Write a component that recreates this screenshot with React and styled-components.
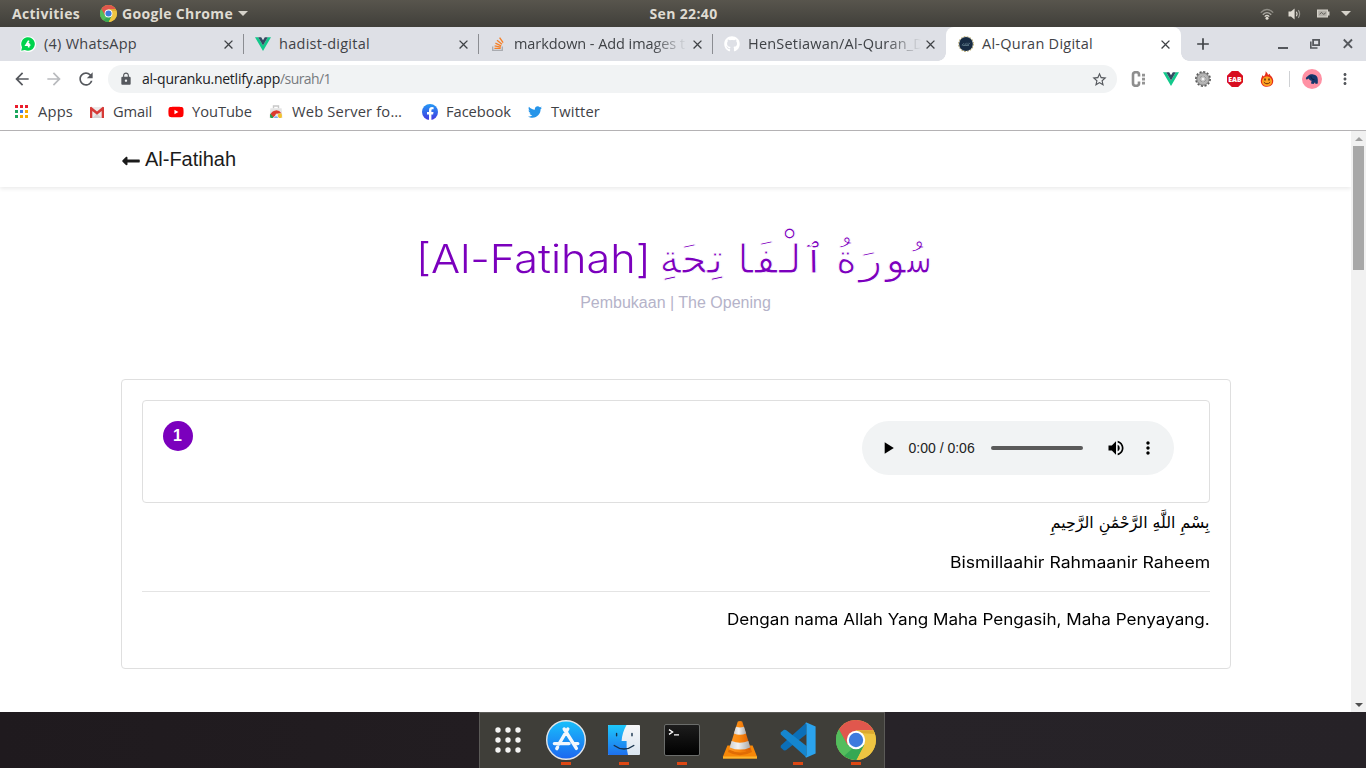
import React, { useLayoutEffect, useRef, useState } from "react";
import styled, { createGlobalStyle } from "styled-components";
import { FaLongArrowAltLeft, FaGithub, FaTwitter, FaYoutube } from "react-icons/fa";
import {
  MdArrowBack, MdArrowForward, MdRefresh, MdLock, MdStarBorder,
  MdClose, MdAdd, MdMoreVert, MdVolumeUp, MdPlayArrow,
} from "react-icons/md";

const Global = createGlobalStyle`
  * { box-sizing: border-box; }
  html, body { margin: 0; padding: 0; overflow: hidden; }
  body { background: #fff; font-family: "Liberation Sans", Arial, sans-serif; }
  svg { display: block; flex: none; }
`;

const UI_FONT = `"Open Sans", "Noto Sans", sans-serif`;
const PURPLE = "#7b00bd";

/* Single-line label whose tracking is computed so that it fills a given width. */
const Line = styled.span`
  display: inline-block;
  white-space: pre;
  flex: none;
`;
function Fit({ w, children }) {
  const ref = useRef(null);
  const [track, setTrack] = useState(0);
  useLayoutEffect(() => {
    const natural = ref.current.getBoundingClientRect().width;
    setTrack((w - natural) / String(children).length);
  }, [w, children]);
  return <Line ref={ref} style={{ letterSpacing: track }}>{children}</Line>;
}

/* Single-line label whose glyphs are widened to fill a given width. */
const WideBox = styled.span`
  display: inline-flex;
  width: ${(p) => p.$w}px;
  flex: none;
  vertical-align: top;
`;
const WideText = styled(Line)`transform-origin: 0 50%;`;
function Wide({ w, children }) {
  const ref = useRef(null);
  const [scale, setScale] = useState(1);
  useLayoutEffect(() => {
    setScale(w / ref.current.offsetWidth);
  }, [w, children]);
  return (
    <WideBox $w={w}>
      <WideText ref={ref} style={{ transform: `scaleX(${scale})` }}>{children}</WideText>
    </WideBox>
  );
}

const Screen = styled.div`
  width: 1366px;
  height: 768px;
  display: flex;
  flex-direction: column;
  overflow: hidden;
`;

/* ---------- desktop top bar ---------- */
const TopBar = styled.div`
  height: 27px;
  flex: none;
  display: grid;
  grid-template-columns: 1fr auto 1fr;
  align-items: center;
  padding: 0 15px 0 16px;
  background: linear-gradient(#58554d, #403f3a);
  color: #dfdbd2;
  font: 700 14px/27px ${UI_FONT};
`;
const TopLeft = styled.div`
  display: flex;
  align-items: center;
  margin-left: -4px;
  svg { margin: 0 5px 0 20px; }
`;
const TopRight = styled.div`
  display: flex;
  justify-content: flex-end;
  align-items: center;
`;
const Caret = styled.i`
  width: 0;
  height: 0;
  margin-left: ${(p) => p.$gap}px;
  border: 5px solid transparent;
  border-top-color: #d5d2ca;
  border-bottom: 0;
`;
const IconGap = styled.i`
  width: ${(p) => p.$w}px;
  flex: none;
`;

/* ---------- tabs ---------- */
const TabStrip = styled.div`
  height: 34px;
  flex: none;
  display: flex;
  background: #dee0e6;
  font: 14.5px/34px ${UI_FONT};
  color: #3f4246;
`;
const Tab = styled.div`
  position: relative;
  width: ${(p) => p.$w}px;
  flex: none;
  display: flex;
  align-items: center;
  padding: 0 8px 0 ${(p) => p.$pad || 11}px;
  ${(p) => p.$line && `
    &::after { content: ""; width: 1px; height: 20px; background: #8b8d92; margin: 0 -8px 0 7px; }
  `}
  ${(p) => p.$active && `
    background: #fff;
    border-radius: 8px 8px 0 0;
    padding-left: 12px;
    &::before, &::after { content: ""; position: absolute; bottom: 0; width: 8px; height: 8px; }
    &::before { left: -8px; background: radial-gradient(circle at 0 0, transparent 7.5px, #fff 8px); }
    &::after { right: -8px; background: radial-gradient(circle at 100% 0, transparent 7.5px, #fff 8px); }
  `}
`;
const TabTitle = styled.div`
  flex: 1;
  min-width: 0;
  margin-left: 8px;
  ${(p) => p.$fade && "mask-image: linear-gradient(90deg, #000 138px, transparent 173px);"}
`;
const WindowButtons = styled.div`
  flex: 1;
  display: flex;
  align-items: center;
  padding-left: 12px;
`;
const WinIcons = styled.div`
  margin-left: 64px;
`;

/* ---------- toolbar ---------- */
const Toolbar = styled.div`
  height: 36px;
  flex: none;
  display: flex;
  align-items: center;
  padding: 0 11px 0 12px;
  color: #55585d;
`;
const Nav = styled.div`
  display: flex;
  gap: 12px;
  margin-right: 12px;
  width: 84px;
`;
const Omnibox = styled.div`
  width: 1009px;
  height: 28px;
  display: flex;
  align-items: center;
  border-radius: 14px;
  background: #f1f3f4;
  padding: 0 9px 0 11px;
  font: 14px/28px ${UI_FONT};
  color: #202124;
  > svg:first-child { margin-right: 9px; }
  > svg:last-child { margin-left: auto; }
`;
const UrlPath = styled.span`color: #777a7e;`;
const Extensions = styled.div`
  flex: 1;
  display: flex;
  align-items: center;
  padding-left: 14px;
  gap: 16px;
  > svg:last-child { margin-left: -2px; }
`;
const Divider = styled.i`
  width: 1px;
  height: 16px;
  background: #cfd1d4;
  margin: 0 -4px 0 -2px;
`;
const Avatar = styled.div`
  width: 20px;
  height: 20px;
  border-radius: 50%;
  background: #ff91a4;
`;

/* ---------- bookmarks ---------- */
const Bookmarks = styled.div`
  height: 34px;
  flex: none;
  display: flex;
  align-items: center;
  padding: 0 0 4px 13px;
  border-bottom: 1px solid #b6b4b6;
  font: 14.7px/29px ${UI_FONT};
  color: #3f4246;
`;
const Bookmark = styled.div`
  display: flex;
  align-items: center;
  gap: ${(p) => p.$inner || 8}px;
  margin-right: ${(p) => p.$gap || 0}px;
`;

/* ---------- web page ---------- */
const Viewport = styled.div`
  height: 581px;
  flex: none;
  display: flex;
`;
const Page = styled.div`
  width: 1351px;
  display: flex;
  flex-direction: column;
  align-items: center;
`;
const PageHeader = styled.header`
  width: 100%;
  height: 56px;
  flex: none;
  display: flex;
  align-items: center;
  padding-left: 121px;
  color: #1b1b1b;
  font-size: 20px;
  box-shadow: 0 2px 4px rgba(0, 0, 0, 0.08);
  svg { margin: 3px 4px 0 0; }
`;
const Title = styled.h1`
  display: flex;
  align-items: center;
  margin: 45px 0 0;
  height: 54px;
  width: 520px;
  color: ${PURPLE};
  font: 300 39px/54px Inter, sans-serif;
`;
const TitleArabic = styled.span`
  margin: 0 5px 0 auto;
  white-space: nowrap;
  word-spacing: -15px;
  font: 400 40px/54px "DejaVu Sans Mono", monospace;
  -webkit-text-stroke: 1px #fff;
`;
const Subtitle = styled.p`
  margin: 8px 0 0;
  font-size: 16px;
  line-height: 18px;
  color: #b5b3c9;
`;
const Card = styled.section`
  width: 1110px;
  height: 290px;
  margin-top: 67px;
  padding: 20px;
  border: 1px solid #dfdfdf;
  border-radius: 4px;
  color: #000;
  font: 400 16px/24px Inter, sans-serif;
  text-align: right;
`;
const VerseHead = styled.div`
  height: 103px;
  display: flex;
  justify-content: space-between;
  align-items: flex-start;
  padding: 20px 35px 0 20px;
  border: 1px solid #dfdfdf;
  border-radius: 4px;
`;
const Badge = styled.div`
  width: 30px;
  height: 30px;
  border-radius: 50%;
  background: ${PURPLE};
  color: #fff;
  font: 700 16px/30px "Liberation Sans", sans-serif;
  text-align: center;
`;
const Player = styled.div`
  width: 312px;
  height: 54px;
  border-radius: 27px;
  background: #f1f3f4;
  display: flex;
  align-items: center;
  padding-left: 16px;
  color: #000;
`;
const Time = styled.span`
  margin: 0 16px 0 11px;
  color: #222;
  font: 14px/20px "Liberation Sans", sans-serif;
`;
const Track = styled.i`
  width: 92px;
  height: 4px;
  border-radius: 2px;
  background: #5a5a5a;
  margin-right: 23px;
`;
const Verse = styled.p`
  margin: 8px 0 0;
  font: 15.8px/24px "DejaVu Sans", sans-serif;
`;
const Latin = styled.p`margin: 15px 0 0;`;
const Rule = styled.hr`
  margin: 17px 0 15px;
  border: 0;
  border-top: 1px solid #e4e4e4;
`;
const Meaning = styled.p`margin: 0;`;

const ScrollBar = styled.div`
  width: 15px;
  display: flex;
  flex-direction: column;
  align-items: center;
  background: #f1f1f1;
  padding: 6px 0 5px;
`;
const Thumb = styled.div`
  width: 11px;
  height: 124px;
  margin: 5px 0 auto;
  background: #a8a8a8;
`;
const ScrollArrow = styled.i`
  border: 4px solid transparent;
  ${(p) => (p.$up ? "border-bottom-color:#a0a0a0;border-top:0;" : "border-top-color:#505050;border-bottom:0;")}
`;

/* ---------- dock ---------- */
const DockRow = styled.div`
  height: 56px;
  flex: none;
  display: flex;
  justify-content: center;
  padding-right: 2px;
  background: linear-gradient(90deg, #1f1a1e, #221d21 35%, #272328 65%, #262227);
`;
const Dock = styled.div`
  width: 406px;
  display: flex;
  background: #3f3e39;
  border: solid #5b5a57;
  border-width: 1px 1px 0 1px;
  > :first-child { margin-left: -1px; }
`;
const DockItem = styled.div`
  width: 58px;
  flex: none;
  display: flex;
  flex-direction: column;
  align-items: center;
  padding-top: 7px;
  &::after {
    content: "";
    width: 10px;
    height: 3px;
    margin-top: 2px;
    background: ${(p) => (p.$running ? "#dd4814" : "transparent")};
  }
`;

/* ---------- drawings ---------- */
const ChromeLogo = ({ size }) => (
  <svg width={size} height={size} viewBox="0 0 40 40">
    <circle cx="20" cy="20" r="20" fill="#f2c73c" />
    <path d="M2.7 10A20 20 0 0 1 37.6 10.5H20L11.6 25.2Z" fill="#e0574d" />
    <path d="M2.9 9.6A20 20 0 0 0 20.6 40L28.4 24.8 20 20 11.6 25.2Z" fill="#35a853" />
    <path d="M2.9 9.6A20 20 0 0 0 8 36L17 28 11.6 25.2Z" fill="#54bd5d" />
    <path d="M37.4 10.5H20L28.6 25 20.6 40A20 20 0 0 0 37.4 10.5Z" fill="#eec542" />
    <path d="M37.4 10.5H20L22 13 38.5 14Z" fill="#dba92e" />
    <circle cx="20" cy="20" r="9.2" fill="#fff" />
    <circle cx="20" cy="20" r="7.2" fill="#3d7bdd" />
  </svg>
);
const VueLogo = ({ size = 16 }) => (
  <svg width={size} height={size} viewBox="0 0 16 16">
    <path d="M0 1.2H3.2L8 9.4 12.8 1.2H16L8 15Z" fill="#12c98b" />
    <path d="M3.2 1.2H6.2L8 4.3 9.8 1.2H12.8L8 9.4Z" fill="#344a62" />
  </svg>
);
const WhatsAppIcon = () => (
  <svg width="16" height="16" viewBox="0 0 16 16">
    <path d="M.2 15.8 1 11.4A7.9 7.9 0 1 1 4.6 15.2Z" fill="#fff" />
    <path d="M1.2 14.8 2 11.2A6.8 6.8 0 1 1 4.8 14Z" fill="#00d34c" />
    <path d="M8.8 4.6 6 9.2H10.4M8.7 7V11.4" fill="none" stroke="#fff" strokeWidth="1.7" />
  </svg>
);
const StackIcon = () => (
  <svg width="16" height="16" viewBox="0 0 16 16" fill="none">
    <path d="M2.7 10.5V14.4H12.3V10.5" stroke="#a9abb0" strokeWidth="1.3" />
    <path d="M4.4 12.4H10.7M4.6 9.9 10.8 11.1M5.4 7.2 11.2 9.9M7 4.3 12 8.3M9.6 1.6 13.1 6.6" stroke="#f4802a" strokeWidth="1.4" />
  </svg>
);
const QuranIcon = () => (
  <svg width="16" height="16" viewBox="0 0 16 16">
    <circle cx="8" cy="8" r="7.3" fill="none" stroke="#b9ab72" strokeWidth="1.2" strokeDasharray="1.7 1.2" />
    <circle cx="8" cy="8" r="6.9" fill="#172b43" />
    <path d="M4 9.2 6 7.2M6.4 9.4 8.6 6.8M8.4 9.1 10.4 7.2M10.2 8.8 12 6.8M4.4 9.4H11" stroke="#64808f" strokeWidth=".8" />
  </svg>
);
const AppsIcon = () => (
  <svg width="16" height="16" viewBox="0 0 16 16">
    {["#ea1d2c", "#ea1d2c", "#ea1d2c", "#1ba55c", "#3d7bea", "#f9ab00", "#1ba55c", "#f9ab00", "#f9ab00"].map((c, i) => (
      <rect key={i} x={2 + (i % 3) * 5} y={1 + Math.floor(i / 3) * 5} width="3" height="3" fill={c} />
    ))}
  </svg>
);
const GmailIcon = () => (
  <svg width="16" height="16" viewBox="0 0 16 16">
    <path d="M1.5 3H14.5V14H1.5Z" fill="#eceaea" />
    <path d="M3.4 14 8 9.4 12.6 14Z" fill="#d6d3d3" />
    <path d="M1 3.2V14H3.3V7L8 10.8 12.7 7V14H15V3.2L13.8 2.8 8 7.4 2.2 2.8Z" fill="#d63a37" />
  </svg>
);
const WebServerIcon = () => (
  <svg width="16" height="16" viewBox="0 0 16 16">
    <path d="M5.5 4.5V2H10.5V4.5" fill="none" stroke="#c8c8c8" strokeWidth="1.4" />
    <path d="M2.4 4.2H13.6L14.5 14H1.5Z" fill="#e4e4e4" />
    <path d="M2.4 10.4A6.2 6.2 0 0 1 13.4 9.2L8 9.8 6 14H3Z" fill="#dc3b2e" />
    <path d="M2.2 9.6 6.2 14H2.6A6 6 0 0 1 2.2 9.6Z" fill="#27a04b" />
    <path d="M13.6 9.6A6 6 0 0 1 13.4 14H9.4L10.4 9.6Z" fill="#f4c22c" />
    <path d="M5.4 14A2.7 2.7 0 0 1 10.6 14Z" fill="#4381e8" stroke="#fff" strokeWidth=".7" />
  </svg>
);
const FacebookIcon = () => (
  <svg width="16" height="16" viewBox="0 0 16 16">
    <defs>
      <linearGradient id="fb" x1="0" y1="0" x2="0" y2="1"><stop stopColor="#2499f5" /><stop offset="1" stopColor="#4338e0" /></linearGradient>
    </defs>
    <circle cx="8" cy="8" r="8" fill="url(#fb)" />
    <path d="M7 16V10.4H5V8H7V6.3C7 4.2 8.2 3.1 10 3.1L11.6 3.3V5.2H10.6C9.7 5.2 9.4 5.7 9.4 6.4V8H11.5L11.1 10.4H9.4V16Z" fill="#fff" />
  </svg>
);
const BracketIcon = () => (
  <svg width="16" height="16" viewBox="0 0 16 16">
    <path d="M8 5.4V3.6Q8 1.2 5.6 1.2H4.7Q2 1.2 2 3.8V12.2Q2 14.8 4.7 14.8H5.6Q8 14.8 8 12.4V10.6" fill="none" stroke="#8e8e8e" strokeWidth="2.6" />
    <path d="M11 2.8H14V5.4H11ZM11 6.8H14V9.4H11ZM11 10.8H14V13.4H11Z" fill="#949494" />
  </svg>
);
const GearIcon = () => (
  <svg width="16" height="16" viewBox="0 0 16 16" fill="none">
    <circle cx="8" cy="8" r="7" stroke="#5a5a5a" strokeWidth="1.9" strokeDasharray="2.1 1.56" />
    <circle cx="8" cy="8" r="4.9" stroke="#b4b4b4" strokeWidth="3" />
    <circle cx="8" cy="8" r="6.2" stroke="#6c6c6c" strokeWidth=".8" />
    <circle cx="8" cy="8" r="3.1" stroke="#666" strokeWidth=".7" />
    <circle cx="8" cy="8" r="2" fill="#f4f4f4" stroke="#888" strokeWidth=".6" />
  </svg>
);
const EabIcon = () => (
  <svg width="16" height="16" viewBox="0 0 16 16">
    <path d="M4.8 0H11.2L16 4.8V11.2L11.2 16H4.8L0 11.2V4.8Z" fill="#d80d20" />
    <text x="8" y="10.6" textAnchor="middle" textLength="13.4" lengthAdjust="spacingAndGlyphs" fontFamily="Open Sans" fontWeight="800" fontSize="7.4" fill="#fff">EAB</text>
  </svg>
);
const FlameIcon = () => (
  <svg width="16" height="16" viewBox="0 0 16 16">
    <path d="M6.6.2C8 1.4 8.8 2.6 9 4L10.6 2.8C10.8 4.6 13.6 5.6 14.2 9.2 14.6 13 11.8 15.8 8 15.8S1.5 13 1.8 9.4C2 7 3 6.4 3.2 4.2L5 5.4C6.4 3.6 6.8 2 6.6.2Z" fill="#e62e1a" />
    <path d="M8 5.4C10.8 5.4 13 7.6 13 10.4S10.8 15 8 15 3 13.2 3 10.4 5.2 5.4 8 5.4Z" fill="#ffa321" />
    <path d="M6 7.4V9.4M10 7.4V9.4" stroke="#45200c" strokeWidth="1.4" />
    <path d="M4.8 11.2Q8 14.4 11.2 11.2" stroke="#6b2c0c" strokeWidth="1" fill="none" />
  </svg>
);
const Elephant = () => (
  <svg width="20" height="20" viewBox="0 0 20 20">
    <path d="M3.8 9.6C4 8 5.6 7.8 6.4 6.6 8 4.8 10.4 5.4 11.4 5.4 14 5.6 15.8 7.6 15.8 10.4V14.6L13.6 15 13 13.2 11.6 15 9 14.4 9.6 11.8C8 11.8 7.4 10 6.4 9.4L4.8 10.8Z" fill="#15366b" />
    <path d="M8.8 7.2Q9.4 11 12.4 10.4" stroke="#0a1c3a" strokeWidth="1" fill="none" />
  </svg>
);
const Wifi = () => (
  <svg width="14" height="12" viewBox="0 0 14 12" fill="none" strokeWidth="1.3">
    <path d="M.8 4.6Q7-1.6 13.2 4.6" stroke="#8f8d86" />
    <path d="M2.8 6.7Q7 2.4 11.2 6.7" stroke="#aaa8a1" />
    <path d="M4.7 8.6Q7 6.4 9.3 8.6" stroke="#d5d2ca" />
    <circle cx="7" cy="10.2" r="1.5" fill="#dfdbd2" />
  </svg>
);
const Speaker = () => (
  <svg width="13" height="12" viewBox="0 0 13 12" fill="none">
    <path d="M.5 3.5H3L6.6.6V11.4L3 8.5H.5Z" fill="#dfdbd2" />
    <path d="M8.4 3.8Q9.8 6 8.4 8.2" stroke="#dfdbd2" strokeWidth="1.2" />
    <path d="M10.3 2.2Q12.9 6 10.3 9.8" stroke="#9a9891" strokeWidth="1.2" />
  </svg>
);
const Battery = () => (
  <svg width="13" height="9" viewBox="0 0 13 9">
    <path d="M0 .5H11V2.5H12.5V6.5H11V8.5H0Z" fill="#d5d2ca" />
    <path d="M1.2 1.6H9.8V7.4H1.2Z" fill="#b4b1aa" />
    <path d="M2.6 5.2 4.6 3.4 6.6 5.4 8.8 3.8" stroke="#56544e" strokeWidth=".9" fill="none" />
  </svg>
);
const Windows = () => (
  <svg width="76" height="12" viewBox="0 0 76 12" fill="none" stroke="#55585d">
    <path d="M1 10H11" strokeWidth="2" />
    <path d="M36.1 1.9H42.1V7.1H36.1Z" strokeWidth="1.8" />
    <path d="M33.8 3.5V10H40.5" strokeWidth="1.6" />
    <path d="M66.8 1.5 75 9.8M75 1.5 66.8 9.8" strokeWidth="1.9" />
  </svg>
);

const GridIcon = () => (
  <svg width="40" height="40" viewBox="0 0 40 40" fill="#f3f3f2">
    {[0, 1, 2].map((r) => [0, 1, 2].map((c) => <circle key={`${r}${c}`} cx={10 + c * 10} cy={10 + r * 10} r="2.7" />))}
  </svg>
);
const StoreIcon = () => (
  <svg width="40" height="40" viewBox="0 0 40 40">
    <defs>
      <linearGradient id="store" x1="0" y1="0" x2="0" y2="1"><stop stopColor="#18c0fb" /><stop offset="1" stopColor="#1d66f0" /></linearGradient>
    </defs>
    <circle cx="20" cy="20" r="19.3" fill="url(#store)" stroke="#e4e6e8" strokeWidth="1.4" />
    <g stroke="#f4f8fc" strokeWidth="3.4" strokeLinecap="round" fill="none">
      <path d="M21.8 9 13 24M18.2 9 30.4 28.4M8.4 23.6H23M28.6 23.6H31.8M11.6 27.2 10.8 28.6" />
    </g>
  </svg>
);
const FinderIcon = () => (
  <svg width="40" height="40" viewBox="0 0 40 40">
    <defs>
      <linearGradient id="fl" x1="0" y1="0" x2="0" y2="1"><stop stopColor="#1ec8fb" /><stop offset="1" stopColor="#1e70ee" /></linearGradient>
      <linearGradient id="fr" x1="0" y1="0" x2="0" y2="1"><stop stopColor="#f6f7f9" /><stop offset="1" stopColor="#dae5f0" /></linearGradient>
    </defs>
    <rect x="4" y="5" width="32" height="30" rx="1" fill="url(#fr)" />
    <path d="M5 5H22.5Q18 13 17.6 21H22.6Q22 27 24 35H5Q4 35 4 34V6Q4 5 5 5Z" fill="url(#fl)" />
    <path d="M12.6 13.4V15.8M28 13.4V15.8" stroke="#15304a" strokeWidth="1.4" strokeLinecap="round" />
    <path d="M10.2 25.4Q20 32.6 29.8 25.4" stroke="#15304a" strokeWidth="1.3" fill="none" strokeLinecap="round" />
  </svg>
);
const TerminalIcon = () => (
  <svg width="40" height="40" viewBox="0 0 40 40">
    <defs>
      <linearGradient id="tm" x1="0" y1="0" x2="0" y2="1"><stop stopColor="#1d1d1d" /><stop offset="1" stopColor="#000" /></linearGradient>
    </defs>
    <rect x="2.5" y="4.5" width="35" height="31" rx="1.5" fill="url(#tm)" stroke="#6b6d6b" />
    <path d="M7 9.6 10.6 12 7 14.4M12 14.8H17" stroke="#fff" strokeWidth="1.3" fill="none" />
  </svg>
);
const VlcIcon = () => (
  <svg width="40" height="40" viewBox="0 0 40 40">
    <defs>
      <linearGradient id="cone"><stop stopColor="#fc9a2c" /><stop offset=".45" stopColor="#fb8a10" /><stop offset="1" stopColor="#d95a02" /></linearGradient>
      <linearGradient id="band"><stop stopColor="#cfcfcf" /><stop offset=".4" stopColor="#f2f2f2" /><stop offset="1" stopColor="#a9a9a9" /></linearGradient>
    </defs>
    <path d="M7.4 25.5H32.6L37 36.6V38.6H3V36.6Z" fill="#f78708" />
    <path d="M3 36.4H37V38.6H3Z" fill="#fdb52c" />
    <path d="M9 29Q20 36 31 29L32 32Q20 38.6 8 32Z" fill="#e06c05" />
    <path d="M17.8 1.6Q20 .2 22.2 1.6L31 29.4Q20 34.6 9 29.4Z" fill="url(#cone)" />
    <path d="M16 6.8Q20 8.4 24 6.8L26.2 13.6Q20 16 13.8 13.6Z" fill="url(#band)" />
    <path d="M11.6 21Q20 24.6 28.4 21L30.2 27.4Q20 31.8 9.8 27.4Z" fill="url(#band)" />
  </svg>
);
const CodeIcon = () => (
  <svg width="40" height="40" viewBox="0 0 40 40">
    <path d="M28.5 2.4 2.8 25.4 2.6 27.6 6 30.4 8 30.2 28.5 14Z" fill="#0b6fb8" />
    <path d="M28.5 37.6 2.8 14.6 2.6 12.4 6 9.8 8 10 28.5 26Z" fill="#1586cf" />
    <path d="M28.5 2.4 37.6 6.6V33.4L28.5 37.6Q27.6 37.6 27 36.8 28.5 37 28.5 35V5Q28.5 3 27 3.2Q27.6 2.4 28.5 2.4Z" fill="#2ba3ee" />
  </svg>
);

const TABS = [
  { w: 244, pad: 20, icon: <WhatsAppIcon />, title: "(4) WhatsApp", tw: 93, line: true },
  { w: 235, icon: <VueLogo />, title: "hadist-digital", tw: 91, line: true },
  { w: 234, icon: <StackIcon />, title: "markdown - Add images t", tw: 171, line: true, fade: true },
  { w: 233, icon: <FaGithub size={16} color="#fff" />, title: "HenSetiawan/Al-Quran_D", tw: 176, fade: true },
  { w: 235, icon: <QuranIcon />, title: "Al-Quran Digital", tw: 111, active: true },
];
const BOOKMARKS = [
  { icon: <AppsIcon />, label: "Apps", w: 35, gap: 16, inner: 9 },
  { icon: <GmailIcon />, label: "Gmail", w: 39, gap: 16 },
  { icon: <FaYoutube size={16} color="#f00" />, label: "YouTube", w: 60, gap: 16 },
  { icon: <WebServerIcon />, label: "Web Server fo…", w: 110, gap: 20 },
  { icon: <FacebookIcon />, label: "Facebook", w: 65, gap: 17 },
  { icon: <FaTwitter size={14} color="#2795e9" />, label: "Twitter", w: 49, inner: 9 },
];
const DOCK = [
  { icon: <GridIcon /> },
  { icon: <StoreIcon />, running: true },
  { icon: <FinderIcon />, running: true },
  { icon: <TerminalIcon />, running: true },
  { icon: <VlcIcon /> },
  { icon: <CodeIcon />, running: true },
  { icon: <ChromeLogo size={40} />, running: true },
];

export default function App() {
  return (
    <Screen>
      <Global />
      <TopBar>
        <TopLeft>
          <Fit w={68}>Activities</Fit>
          <ChromeLogo size={17} />
          <Fit w={111}>Google Chrome</Fit>
          <Caret $gap={5} />
        </TopLeft>
        <Fit w={68}>Sen 22:40</Fit>
        <TopRight>
          <Wifi />
          <IconGap $w={14} />
          <Speaker />
          <IconGap $w={16} />
          <Battery />
          <Caret $gap={11} />
        </TopRight>
      </TopBar>

      <TabStrip>
        {TABS.map((t) => (
          <Tab key={t.title} $w={t.w} $pad={t.pad} $line={t.line} $active={t.active}>
            {t.icon}
            <TabTitle $fade={t.fade}><Fit w={t.tw}>{t.title}</Fit></TabTitle>
            <MdClose size={15} />
          </Tab>
        ))}
        <WindowButtons>
          <MdAdd size={20} />
          <WinIcons><Windows /></WinIcons>
        </WindowButtons>
      </TabStrip>

      <Toolbar>
        <Nav>
          <MdArrowBack size={20} />
          <MdArrowForward size={20} color="#b9bbbe" />
          <MdRefresh size={20} />
        </Nav>
        <Omnibox>
          <MdLock size={14} color="#55585d" />
          <Fit w={138}>al-quranku.netlify.app</Fit>
          <UrlPath><Fit w={51}>/surah/1</Fit></UrlPath>
          <MdStarBorder size={17} color="#55585d" />
        </Omnibox>
        <Extensions>
          <BracketIcon />
          <VueLogo />
          <GearIcon />
          <EabIcon />
          <FlameIcon />
          <Divider />
          <Avatar><Elephant /></Avatar>
          <MdMoreVert size={18} />
        </Extensions>
      </Toolbar>

      <Bookmarks>
        {BOOKMARKS.map((b) => (
          <Bookmark key={b.label} $gap={b.gap} $inner={b.inner}>
            {b.icon}
            <Fit w={b.w}>{b.label}</Fit>
          </Bookmark>
        ))}
      </Bookmarks>

      <Viewport>
        <Page>
          <PageHeader><FaLongArrowAltLeft size={20} /><Fit w={91}>Al-Fatihah</Fit></PageHeader>
          <Title>
            <Wide w={235}>[Al-Fatihah]</Wide>
            <TitleArabic dir="rtl">سُورَةُ ٱلْفَاتِحَةِ</TitleArabic>
          </Title>
          <Subtitle>Pembukaan | The Opening</Subtitle>
          <Card>
            <VerseHead>
              <Badge>1</Badge>
              <Player>
                <MdPlayArrow size={20} />
                <Time>0:00 / 0:06</Time>
                <Track />
                <MdVolumeUp size={20} />
                <IconGap $w={12} />
                <MdMoreVert size={20} />
              </Player>
            </VerseHead>
            <Verse dir="rtl">بِسْمِ اللَّهِ الرَّحْمَٰنِ الرَّحِيمِ</Verse>
            <Latin><Wide w={260}>Bismillaahir Rahmaanir Raheem</Wide></Latin>
            <Rule />
            <Meaning><Wide w={483}>Dengan nama Allah Yang Maha Pengasih, Maha Penyayang.</Wide></Meaning>
          </Card>
        </Page>
        <ScrollBar>
          <ScrollArrow $up />
          <Thumb />
          <ScrollArrow />
        </ScrollBar>
      </Viewport>

      <DockRow>
        <Dock>
          {DOCK.map((d, i) => <DockItem key={i} $running={d.running}>{d.icon}</DockItem>)}
        </Dock>
      </DockRow>
    </Screen>
  );
}
